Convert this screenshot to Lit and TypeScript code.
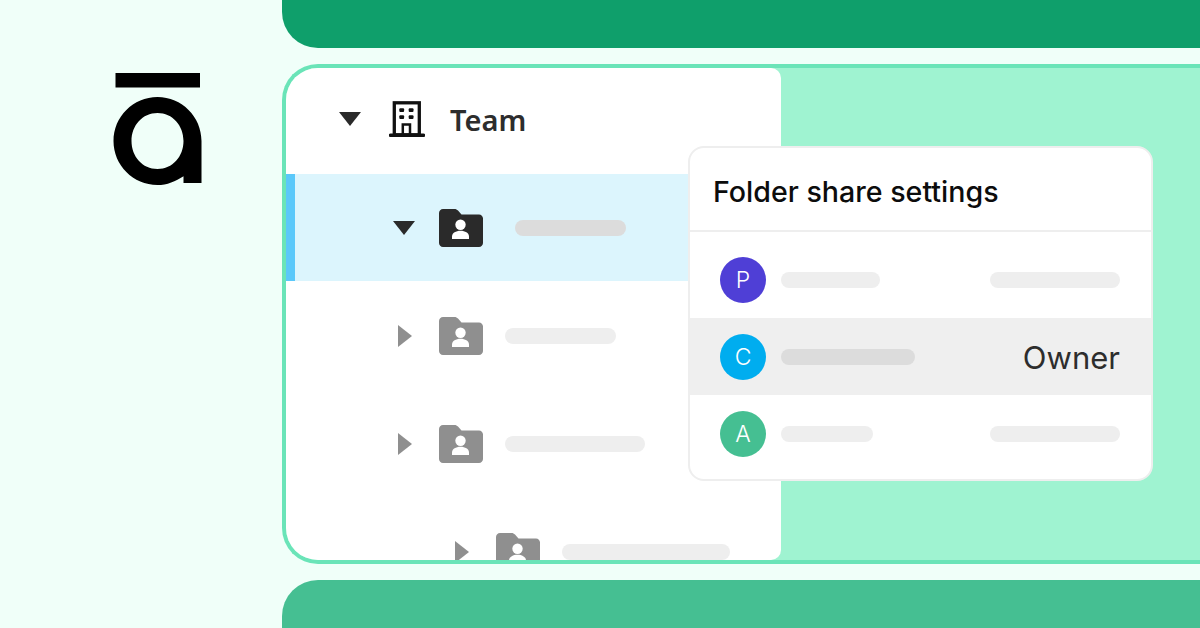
import { LitElement, html, css, svg } from "lit";
import { customElement } from "lit/decorators.js";

const folder = (cls: string) => html`<svg class="folder ${cls}" viewBox="0 0 44 38" aria-hidden="true">
  <path class="fshape" d="M4 0H15.500C17 0 18 .6 19 1.600L22.500 5.500H40C42.200 5.500 44 7.300 44 9.500V34C44 36.200 42.200 38 40 38H4C1.800 38 0 36.200 0 34V4C0 1.800 1.800 0 4 0Z"/>
  <circle cx="21.500" cy="15.800" r="5.200" fill="#fff"/>
  <path d="M13 30V27.500C13 24 17 21.800 21.500 21.800S30 24 30 27.500V30Z" fill="#fff"/>
</svg>`;

const caret = (dir: "down" | "right") =>
  dir === "down"
    ? html`<svg class="caret-d" viewBox="0 0 22 14" aria-hidden="true"><path d="M0 0H22L11 14Z"/></svg>`
    : html`<svg class="caret-r" viewBox="0 0 14 22" aria-hidden="true"><path d="M0 0L14 11L0 22Z"/></svg>`;

const building = svg`<rect x="5.300" y="1.800" width="25" height="32" fill="none" stroke="#111" stroke-width="3.300"/>
  <path d="M1.500 34.300H34.500" stroke="#111" stroke-width="3.500" stroke-linecap="round"/>
  <rect x="10.300" y="7.300" width="4.800" height="3.800" rx="1" fill="#111"/><rect x="19.700" y="7.300" width="4.800" height="3.800" rx="1" fill="#111"/>
  <rect x="10.300" y="14.300" width="4.800" height="3.800" rx="1" fill="#111"/><rect x="19.700" y="14.300" width="4.800" height="3.800" rx="1" fill="#111"/>
  <path d="M13.800 34V23.500H21V34" fill="none" stroke="#111" stroke-width="2.500"/>`;

@customElement("app-root")
export class AppRoot extends LitElement {
  static styles = css`
    :host { display: block; width: 1200px; height: 628px; overflow: hidden; background: #f0fff9; font-family: "Inter", "Noto Sans", sans-serif; color: #2a2a2a; }
    .page { display: flex; height: 628px; }
    .side { width: 282px; flex: none; padding: 73px 0 0 113px; box-sizing: border-box; }
    .logo { display: block; width: 90px; height: 112px; }
    .main { flex: 1; display: flex; flex-direction: column; gap: 16px; min-width: 0; }
    .band { height: 48px; flex: none; }
    .band.top { background: #0f9f6b; border-bottom-left-radius: 36px; }
    .band.bottom { background: #45bf92; border-top-left-radius: 36px; }
    .frame { position: relative; height: 500px; box-sizing: border-box; border: 4px solid #6ae4b8; border-right: 0; border-radius: 36px 0 0 36px; background: #9ff3d1; }
    .panel { width: 495px; height: 492px; background: #fff; border-radius: 32px 10px 10px 32px; overflow: hidden; }
    .team { height: 106px; display: flex; align-items: center; padding: 0 0 4px 53px; box-sizing: border-box; }
    .team .bld { width: 36px; height: 36px; margin-left: 28px; display: block; }
    .team .name { margin-left: 25px; font-family: "Noto Sans", sans-serif; font-size: 29px; font-weight: 600; line-height: 1; color: #2d2d2d; }
    .caret-d { display: block; width: 22px; height: 14px; fill: #2a2a2a; flex: none; }
    .caret-r { display: block; width: 14px; height: 22px; fill: #8f8f8f; flex: none; margin-left: 2px; }
    .row { height: 108px; display: flex; align-items: center; box-sizing: border-box; padding-left: 107px; }
    .row.sel { height: 107px; margin-bottom: 1px; background: #dcf5fd; border-left: 9px solid #5ac8fa; padding-left: 98px; }
    .slot { width: 22px; display: flex; justify-content: center; flex: none; }
    .row.indent { padding-left: 164px; }
    .folder { display: block; width: 44px; height: 38px; margin-left: 24px; flex: none; }
    .folder.dark .fshape { fill: #2a2a2a; }
    .folder.grey .fshape { fill: #8f8f8f; }
    .bar { height: 16px; border-radius: 8px; background: #eee; flex: none; }
    .bar.dark { background: #dcdcdc; }
    .row .bar { margin-left: 22px; }
    .row.sel .bar { margin-left: 32px; }
    .w111 { width: 111px; } .w140 { width: 140px; } .w168 { width: 168px; }
    .card { position: absolute; left: 402px; top: 78px; width: 465px; height: 335px; box-sizing: border-box; background: #fff; border: 2px solid #eee; border-radius: 16px; overflow: hidden; }
    .head { height: 84px; box-sizing: border-box; border-bottom: 2px solid #eee; padding: 4px 0 0 23px; display: flex; align-items: center; font-size: 28.600px; font-weight: 500; color: #0c0c0c; }
    .list { padding-top: 9px; }
    .person { height: 77px; display: flex; align-items: center; padding: 0 31px 0 30px; box-sizing: border-box; }
    .person.hl { background: #efefef; }
    .avatar { width: 46px; height: 46px; border-radius: 50%; flex: none; display: flex; align-items: center; justify-content: center; color: #fff; font-size: 23px; font-weight: 300; margin-right: 15px; }
    .p { background: #4f3fd6; } .c { background: #00adef; } .a { background: #45bf92; }
    .spacer { flex: 1; }
    .w99 { width: 99px; } .w134 { width: 134px; } .w92 { width: 92px; } .w130 { width: 130px; }
    .owner { font-size: 31px; font-weight: 400; line-height: 1; color: #2d2d2d; margin-top: 2px; }
  `;

  render() {
    return html`<div class="page">
      <div class="side">
        <svg class="logo" viewBox="0 0 90 112" aria-hidden="true">
          <rect x="2.500" y="0" width="84.500" height="14.500" fill="#000"/>
          <path fill="#000" fill-rule="evenodd" d="M44.500 24C68.800 24 88.500 43.700 88.500 68V110H70.500V103.200C62.700 108.400 54 112 44.500 112C20.200 112 .5 92.300 .5 68S20.200 24 44.500 24ZM44.500 40C29.400 40 18.500 52.500 18.500 68S29.400 96 44.500 96S70.500 83.500 70.500 68S59.600 40 44.500 40Z"/>
        </svg>
      </div>
      <div class="main">
        <div class="band top"></div>
        <div class="frame">
          <div class="panel">
            <div class="team">${caret("down")}<svg class="bld" viewBox="0 0 36 36" aria-hidden="true">${building}</svg><span class="name">Team</span></div>
            <div class="row sel"><span class="slot">${caret("down")}</span>${folder("dark")}<div class="bar dark w111"></div></div>
            <div class="row"><span class="slot">${caret("right")}</span>${folder("grey")}<div class="bar w111"></div></div>
            <div class="row"><span class="slot">${caret("right")}</span>${folder("grey")}<div class="bar w140"></div></div>
            <div class="row indent"><span class="slot">${caret("right")}</span>${folder("grey")}<div class="bar w168"></div></div>
          </div>
          <div class="card">
            <div class="head">Folder share settings</div>
            <div class="list">
              <div class="person"><div class="avatar p">P</div><div class="bar w99"></div><div class="spacer"></div><div class="bar w130"></div></div>
              <div class="person hl"><div class="avatar c">C</div><div class="bar dark w134"></div><div class="spacer"></div><div class="owner">Owner</div></div>
              <div class="person"><div class="avatar a">A</div><div class="bar w92"></div><div class="spacer"></div><div class="bar w130"></div></div>
            </div>
          </div>
        </div>
        <div class="band bottom"></div>
      </div>
    </div>`;
  }
}
